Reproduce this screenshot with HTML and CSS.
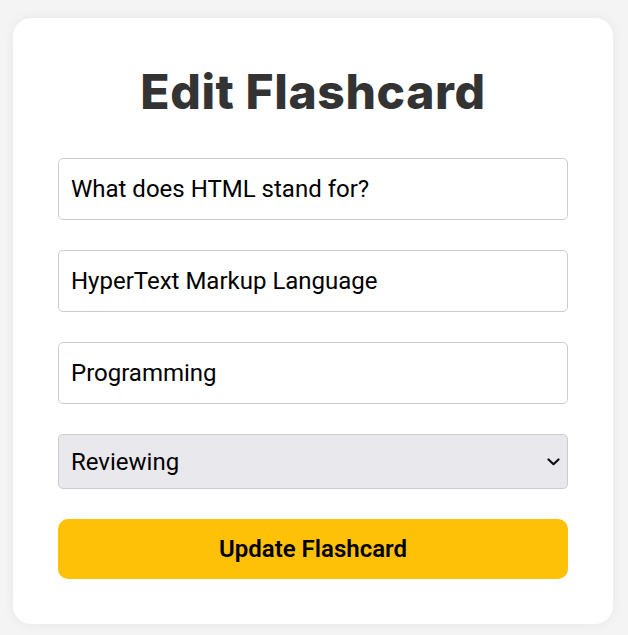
FILE: index.html
```html
<!DOCTYPE html>
<html lang="en">
<head>
<meta charset="utf-8">
<title>Edit Flashcard</title>
<link rel="stylesheet" href="styles.css">
</head>
<body>
<main class="card">
  <h1 class="title">Edit Flashcard</h1>
  <form class="form">
    <input class="field" type="text" value="What does HTML stand for?">
    <input class="field" type="text" value="HyperText Markup Language">
    <input class="field" type="text" value="Programming">
    <div class="select-wrap">
      <select class="field select">
        <option>Reviewing</option>
        <option>New</option>
        <option>Mastered</option>
      </select>
      <svg class="chevron" width="13" height="8" viewBox="0 0 13 8" aria-hidden="true">
        <path d="M1.5 1.5 L6.5 6.2 L11.5 1.5" fill="none" stroke="#111" stroke-width="2.2" stroke-linecap="round" stroke-linejoin="round"/>
      </svg>
    </div>
    <button class="btn" type="button">Update Flashcard</button>
  </form>
</main>
</body>
</html>
```

FILE: styles.css
```css
html, body {
  margin: 0;
  padding: 0;
}
body {
  background: #f4f4f4;
  font-family: Roboto, "Liberation Sans", sans-serif;
  padding: 18px 0 11px 13px;
}
.card {
  width: 600px;
  box-sizing: border-box;
  background: #ffffff;
  border-radius: 18px;
  box-shadow: 0 0 12px rgba(0, 0, 0, 0.06);
  padding: 44px 45px 45px;
}
.title {
  margin: 0 0 36px;
  text-align: center;
  font-family: Inter, "DejaVu Sans", sans-serif;
  font-weight: 800;
  font-size: 48px;
  line-height: 60px;
  color: #333333;
  letter-spacing: 0.6px;
}
.form {
  display: flex;
  flex-direction: column;
  gap: 30px;
}
.field {
  box-sizing: border-box;
  width: 100%;
  height: 62px;
  margin: 0;
  padding: 0 12px;
  border: 1px solid #cccccc;
  border-radius: 5px;
  background: #ffffff;
  font-family: Roboto, "Liberation Sans", sans-serif;
  font-size: 24px;
  color: #000000;
}
.select-wrap {
  position: relative;
}
.select {
  display: block;
  height: 55px;
  appearance: none;
  -webkit-appearance: none;
  background-color: #e9e9ed;
  padding: 0 36px 0 12px;
}
.chevron {
  position: absolute;
  right: 8px;
  top: 24px;
  pointer-events: none;
}
.btn {
  height: 60px;
  border: none;
  border-radius: 10px;
  background: #ffc107;
  font-family: Roboto, "Liberation Sans", sans-serif;
  font-size: 24px;
  font-weight: 600;
  color: #000000;
  cursor: pointer;
}
```
